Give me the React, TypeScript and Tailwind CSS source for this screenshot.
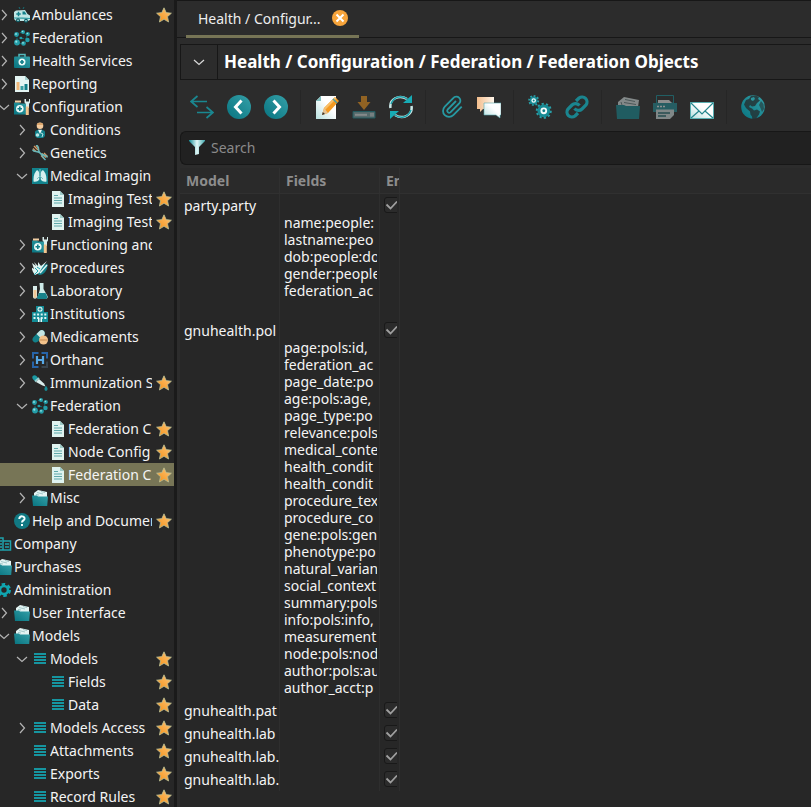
import type { ReactNode } from 'react';

const teal = '#12808a';
const aqua = '#1fa3ad';

function Glyph({ children, big = false, dim = false }: { children: ReactNode; big?: boolean; dim?: boolean }) {
  return (
    <svg
      viewBox={big ? '0 0 24 24' : '0 0 16 16'}
      className={`${big ? 'size-6' : 'size-4'} shrink-0 ${dim ? 'opacity-50' : ''}`}
      fill="none"
      aria-hidden="true"
    >
      {children}
    </svg>
  );
}

const folder = (
  <>
    <path d="M2 7V3l4-3 9 2v5z" fill="#e4f4f3" />
    <path d="M5 2.500l6 1.500M9 1.500l4 1M4 4.500l3 .5" stroke="#93bfc0" strokeWidth=".8" />
    <path d="M0 5.500h5l1 1h10L15.200 16H1z" fill="url(#tealFade)" />
  </>
);

const toolFolder = (
  <>
    <path d="M0 3.500h5l1 1h6V15.500H0z" fill="url(#tealFade)" />
    <path d="M1 1.500h6v2H1z" fill="#f2cfa4" />
    <path d="M10.500 0v3.500L12 5v4h3V5l1-1.500V0h-1v2.500h-3V0z" fill="#dcefed" />
    <path d="M11.800 7.500h3V16h-3z" fill="#f3c48e" />
    <circle cx="5.800" cy="9.800" r="3.800" fill="#ecfaf8" />
    <path d="M5.800 7.500V12M3.500 9.800H8" stroke={teal} strokeWidth="1.600" />
  </>
);

const network = (
  <>
    <path d="M3 4l5-2 5 3-1 7-5 2-4-3zM5 8l7 1" stroke="#127078" strokeWidth="1" strokeDasharray="2 1" />
    <g fill="#249da8">
      <circle cx="2.500" cy="4.500" r="2.400" />
      <circle cx="9" cy="2" r="2" />
      <circle cx="13.800" cy="4" r="2.100" />
      <circle cx="3" cy="12.500" r="2.900" />
      <circle cx="9.500" cy="13.500" r="2.300" />
      <circle cx="13.500" cy="10" r="2.200" />
      <circle cx="7" cy="8" r="1.300" />
    </g>
    <g fill="#8fe0e2">
      <circle cx="2" cy="4" r=".9" />
      <circle cx="8.500" cy="1.500" r=".8" />
      <circle cx="13.400" cy="3.500" r=".8" />
      <circle cx="2.300" cy="11.700" r="1.100" />
      <circle cx="9" cy="12.800" r=".9" />
    </g>
  </>
);

const icons: Record<string, ReactNode> = {
  folder,
  toolFolder,
  network,
  ambulance: (
    <>
      <path d="M5 0l1 2M9 2l1-2" stroke="#176e75" />
      <path d="M0 5l2-1.500 9-.500 2.500 4 2.500 1.500V13l-2 1H2l-2-2z" fill="#bfe6e5" />
      <path d="M8.500 4.500h2.200L12.500 7.500H8.500z" fill={teal} />
      <path d="M0 10.500h9l7 .5v1l-16-.5z" fill="#2d9aa1" />
      <path d="M4.500 4.800v4.400M2.300 7h4.400" stroke={teal} strokeWidth="1.500" />
      <circle cx="4" cy="13.300" r="2" fill="#0d5f68" />
      <circle cx="12" cy="13.800" r="2" fill="#0d5f68" />
      <circle cx="4" cy="13.300" r=".8" fill="#d3efed" />
      <circle cx="12" cy="13.800" r=".8" fill="#d3efed" />
    </>
  ),
  kit: (
    <>
      <path d="M5 4V1.500h6V4" stroke="#56b9bc" strokeWidth="1.500" />
      <rect y="3.500" width="16" height="11.500" rx="1" fill="url(#tealFade)" />
      <circle cx="8" cy="9" r="3.500" fill="#eafaf8" />
      <path d="M8 7v4M6 9h4" stroke={teal} strokeWidth="1.700" />
    </>
  ),
  report: (
    <>
      <path d="M1 0h10l4 4v12H1z" fill="#e4f5f3" />
      <path d="M11 0v4h4z" fill="#a8d3d2" />
      <path d="M2.500 6h3v8h-3z" fill="#efb77a" />
      <path d="M6.500 10h3v4h-3z" fill="#3a9fa3" />
      <path d="M10.500 8h3v6h-3z" fill={teal} />
    </>
  ),
  person: (
    <>
      <circle cx="8" cy="3.800" r="3.300" fill="#f5cb9d" />
      <path d="M4.800 3C5 0 11 0 11.200 3z" fill="#dca56b" />
      <path d="M3 9.500c1-2.500 9-2.500 10 0V14l-2 2H5l-2-2z" fill={teal} />
      <path d="M6 7.800h4L8 12z" fill="#f2fbfa" />
      <circle cx="5.500" cy="13" r="1.800" fill="#b6e5e4" />
      <path d="M9 11l2 1-1 3" stroke="#b6e5e4" />
    </>
  ),
  dna: (
    <>
      <path d="M2 1l4 4M1 3.500l3 3M4 .5l3 3M10 8.500l4 4M9 10.500l3 3M12 8l3.500 3.500" stroke="#d99a63" strokeWidth="1.300" />
      <path d="M.5 4.500C2 8 5 5 8 8s3 5 5.500 7M4 0c4 1 1 5 4 8s6 1 7.500 4.500" stroke="#69b6b8" strokeWidth="1.500" />
    </>
  ),
  lungs: (
    <>
      <rect width="16" height="16" fill="#12838d" />
      <path d="M7.300 5.500C6.500 2 5 1.500 3.800 3.500 1.500 6.500 1.500 10 1.500 13.500c2 .5 4.500 0 5.800-2z" fill="#d6f0ef" />
      <path d="M8.700 5.500c.8-3.500 2.300-4 3.500-2 2.300 3 2.300 6.500 2.300 10-2 .5-4.500 0-5.800-2z" fill="#d6f0ef" />
      <path d="M8 1v7L5 11M8 8l3 3" stroke="#7cc3c6" />
    </>
  ),
  page: (
    <>
      <path d="M2 0h8l4 4v12H2z" fill="#dff3f0" />
      <path d="M10 0v4h4z" fill="#9ccac7" />
      <path d="M4 4.500h4M4 7h8M4 9.500h8M4 12h8" stroke="#5fa8aa" />
    </>
  ),
  procedures: (
    <>
      <path d="M4 12c0-5 5-6 11.500-8.500C16 9 13 15 7 15z" fill={teal} />
      <path d="M0 3l4 3-2-4 4 4V2l3 4 6-5-5 7-3 5-4 2-2-3-2-5 3 2z" fill="#dff3f1" />
      <path d="M8 13l7-8" stroke="#dff3f1" strokeWidth="1.500" />
      <path d="M3 8l3 3M5 7l3 2M2 15l4-4" stroke={aqua} />
    </>
  ),
  lab: (
    <>
      <path d="M1 3h4v10.500c0 3-4 3-4 0z" fill="#d9ecea" />
      <path d="M1.500 7h3v6.500c0 2-3 2-3 0z" fill="#f0c595" />
      <path d="M7.500 0h4v6l4 7c1 2-1 3-2 3H7c-2 0-2-2-1-3l2-7z" fill="#cdebe8" />
      <path d="M7 10h6.500l2 4-1 2H6l-1-1.500z" fill="#17828a" />
    </>
  ),
  hospital: (
    <>
      <path d="M4 0h8v6h4v10H0V6h4z" fill="#138c96" />
      <circle cx="8" cy="3.200" r="2.500" fill="#e7f8f7" />
      <path d="M8 1.700v3M6.500 3.200h3" stroke={teal} />
      <path d="M1.500 8.500h13M1.500 12h13" stroke="#dff4f3" strokeWidth="1.800" strokeDasharray="2 1.600" />
      <path d="M6 12h4v4H6z" fill="#e9f7f6" />
      <path d="M8 12v4" stroke={teal} />
    </>
  ),
  pills: (
    <>
      <path d="M1.500 8l6-6c3-3 7 1 4.500 4.500l-6 6c-3.500 3-7.500-1-4.500-4.500z" fill="#138089" />
      <path d="M4.500 5l3-3c3-3 7 1 4.500 4.500L9 9.500z" fill="#c5e5e2" />
      <circle cx="11.500" cy="11" r="4.500" fill="#f2c28a" />
      <path d="M7.500 11h8" stroke="#c58b50" />
    </>
  ),
  orthanc: (
    <>
      <path d="M1 6.500V1h5.500M9.500 1H15v5.500" stroke="#2764a8" strokeWidth="2" />
      <path d="M1 9.500V15h5.500" stroke="#2764a8" strokeWidth="2" />
      <path d="M9.500 15H15V9.500" stroke="#39444d" strokeWidth="2" />
      <path d="M5 4v8M11 4v8M5 8h6" stroke="#57a8e5" strokeWidth="2.200" />
    </>
  ),
  dropper: (
    <>
      <path d="M1 .8C3-.8 5.500 1.500 6 3.500L3.500 6C1 5-.8 2.500 1 .8z" fill="#1b9aa4" />
      <path d="M3 6.500L7 3" stroke="#91cecf" strokeWidth="2" />
      <path d="M4 7l3-3 5 4.500 1.500 3-3-1z" fill="#dceeed" />
      <path d="M14 11c3 3 1 5 0 5s-3-2 0-5z" fill="#168b95" />
    </>
  ),
  help: (
    <>
      <circle cx="8" cy="8" r="8" fill="#117983" />
      <path d="M5.300 6c0-4 6-3 5.200 0C10 7.500 8 7.500 8 9.500M8 11v2" stroke="#f2ffff" strokeWidth="2" />
    </>
  ),
  company: (
    <>
      <path d="M1 2h6v12H1zM7 5h7.500v9H7z" stroke={aqua} strokeWidth="1.500" />
      <path d="M2 5h4M2 8h4M2 11h4M9 8h4M9 11h4" stroke={aqua} strokeWidth="1.500" />
    </>
  ),
  gear: (
    <>
      <circle cx="8" cy="8" r="5.800" stroke="#10a5b0" strokeWidth="2.400" strokeDasharray="3.500 2.570" />
      <circle cx="8" cy="8" r="4" stroke="#10a5b0" strokeWidth="2.600" />
    </>
  ),
  list: <path d="M2 3h12M2 6h12M2 9h12M2 12h12" stroke="#1695a0" strokeWidth="2" />,
};

type Node = { level: number; icon: string; label: string; open?: boolean; star?: boolean; current?: boolean };

const tree: Node[] = [
  { level: 1, icon: 'ambulance', label: 'Ambulances', open: false, star: true },
  { level: 1, icon: 'network', label: 'Federation', open: false },
  { level: 1, icon: 'kit', label: 'Health Services', open: false },
  { level: 1, icon: 'report', label: 'Reporting', open: false },
  { level: 1, icon: 'toolFolder', label: 'Configuration', open: true },
  { level: 2, icon: 'person', label: 'Conditions', open: false },
  { level: 2, icon: 'dna', label: 'Genetics', open: false },
  { level: 2, icon: 'lungs', label: 'Medical Imagin', open: true },
  { level: 3, icon: 'page', label: 'Imaging Test', star: true },
  { level: 3, icon: 'page', label: 'Imaging Test', star: true },
  { level: 2, icon: 'toolFolder', label: 'Functioning and', open: false },
  { level: 2, icon: 'procedures', label: 'Procedures', open: false },
  { level: 2, icon: 'lab', label: 'Laboratory', open: false },
  { level: 2, icon: 'hospital', label: 'Institutions', open: false },
  { level: 2, icon: 'pills', label: 'Medicaments', open: false },
  { level: 2, icon: 'orthanc', label: 'Orthanc', open: false },
  { level: 2, icon: 'dropper', label: 'Immunization S', open: false, star: true },
  { level: 2, icon: 'network', label: 'Federation', open: true },
  { level: 3, icon: 'page', label: 'Federation C', star: true },
  { level: 3, icon: 'page', label: 'Node Config', star: true },
  { level: 3, icon: 'page', label: 'Federation C', star: true, current: true },
  { level: 2, icon: 'folder', label: 'Misc', open: false },
  { level: 1, icon: 'help', label: 'Help and Documen', star: true },
  { level: 0, icon: 'company', label: 'Company' },
  { level: 0, icon: 'folder', label: 'Purchases' },
  { level: 0, icon: 'gear', label: 'Administration' },
  { level: 1, icon: 'folder', label: 'User Interface', open: false },
  { level: 1, icon: 'folder', label: 'Models', open: true },
  { level: 2, icon: 'list', label: 'Models', open: true, star: true },
  { level: 3, icon: 'list', label: 'Fields', star: true },
  { level: 3, icon: 'list', label: 'Data', star: true },
  { level: 2, icon: 'list', label: 'Models Access', open: false, star: true },
  { level: 2, icon: 'list', label: 'Attachments', star: true },
  { level: 2, icon: 'list', label: 'Exports', star: true },
  { level: 2, icon: 'list', label: 'Record Rules', star: true },
];

const indents = ['pl-0', 'pl-[18px]', 'pl-[36px]', 'pl-[54px]'];

function TreeRow({ node }: { node: Node }) {
  return (
    <li className={`flex h-[23px] items-center pr-0.5 ${indents[node.level]} ${node.current ? 'bg-[#777556]' : ''}`}>
      {node.open === undefined ? (
        <span className="w-4 shrink-0" />
      ) : (
        <button className="size-4 shrink-0" aria-label={node.open ? 'Collapse' : 'Expand'}>
          <Glyph>
            <path d={node.open ? 'M3 6l5 4.500L13 6' : 'M6 3l4.500 5L6 13'} stroke="#b4b4b4" strokeWidth="1.200" />
          </Glyph>
        </button>
      )}
      <a href="#" className="ml-0.5 flex min-w-0 flex-1 items-center gap-0.5" aria-current={node.current ? 'page' : undefined}>
        <Glyph>{icons[node.icon]}</Glyph>
        <span className="min-w-0 flex-1 overflow-x-clip whitespace-nowrap">{node.label}</span>
      </a>
      <span className="ml-1 size-4 shrink-0">
        {node.star && (
          <button className="block" aria-label="Favorite">
            <Glyph>
              <path
                d="M8 .8l2.200 4.800 5.200.6-3.900 3.500 1.100 5.300L8 12.300 3.400 15l1.100-5.300L.6 6.200l5.200-.6z"
                fill="url(#gold)"
                stroke="#b9bf95"
                strokeWidth=".8"
                strokeLinejoin="round"
              />
            </Glyph>
          </button>
        )}
      </span>
    </li>
  );
}

type Tool = { label: string; dim?: boolean; art: ReactNode };

const cog = (cx: number, cy: number, r: number, teeth: number) => (
  <>
    <circle cx={cx} cy={cy} r={r - 1} stroke="#2aa0a9" strokeWidth="2" pathLength={teeth * 2} strokeDasharray="1 1" />
    <circle cx={cx} cy={cy} r={r - 1.6} fill="#178b95" />
    <circle cx={cx} cy={cy} r={r * 0.42} fill="#f4fcfc" />
    <circle cx={cx} cy={cy} r={r * 0.18} fill={teal} />
  </>
);

const toolGroups: Tool[][] = [
  [
    {
      label: 'Switch view',
      art: <path d="M7.500 1L1 6.500 7.500 12M1 6.500h16M16.500 12l6.500 5.500-6.500 5.500M23 17.500H7" stroke="#1a8790" strokeWidth="1.700" />,
    },
    {
      label: 'Previous',
      art: (
        <>
          <circle cx="12" cy="12" r="12" fill="url(#tealFade)" />
          <path d="M14.500 5.500L8.500 12l6 6.500" stroke="#fff" strokeWidth="3" />
        </>
      ),
    },
    {
      label: 'Next',
      art: (
        <>
          <circle cx="12" cy="12" r="12" fill="url(#tealFade)" />
          <path d="M9.500 5.500l6 6.500-6 6.500" stroke="#fff" strokeWidth="3" />
        </>
      ),
    },
  ],
  [
    {
      label: 'New',
      art: (
        <>
          <path d="M6 1h15v23H1V6z" fill="url(#paper)" />
          <path d="M1 6h5V1z" fill="#7fbdbd" />
          <path d="M7 20l2-7L20 2l4 4-11 12z" fill="#f59a21" />
          <path d="M9 13L20 2l1.500 1.500L10 15z" fill="#f8c06a" />
          <path d="M7 20l2-7 4 5z" fill="#e5c394" />
          <path d="M7 20l.8-3L10 19z" fill="#333" />
          <path d="M18 4l4 4" stroke="#4f9da0" strokeWidth="1.500" />
        </>
      ),
    },
    {
      label: 'Save',
      dim: true,
      art: (
        <>
          <path d="M9 1h6v6h3.500L12 15 5.500 7H9z" fill="#f69a1c" />
          <path d="M1 16.500h22v6.500H1z" fill="#7fa9ab" stroke="#1b8992" />
          <path d="M3 19.800h12" stroke="#dce7e8" strokeWidth="2" />
          <path d="M19 18v3.500M21 18v3.500" stroke="#fff" />
        </>
      ),
    },
    {
      label: 'Reload',
      art: (
        <>
          <path d="M1.500 13C0 4 10-1 18 4" stroke="#cbe9e9" strokeWidth="2.500" />
          <path d="M22.500 11C24 20 14 25 6 20" stroke="#cbe9e9" strokeWidth="2.500" />
          <path d="M2 9C5 1 13 0 18 4M22 15c-3 8-11 9-16 5" stroke="#1ba0aa" strokeWidth="1.500" />
          <path d="M14 8h9V0zM10 16H1v8z" fill="#17acb6" />
        </>
      ),
    },
  ],
  [
    {
      label: 'Attachments',
      art: (
        <path
          d="M16 6l-8.400 8.600a2 2 0 0 0 2.800 2.800l8.400-8.600a4 4 0 1 0-5.600-5.600L4.800 11.700a6 6 0 1 0 8.500 8.500l8.400-8.500"
          stroke="#2799a2"
          strokeWidth="1.800"
        />
      ),
    },
    {
      label: 'Notes',
      art: (
        <>
          <path d="M0 2h17v12H6l-3 3v-3H0z" fill="url(#peach)" />
          <path d="M7 8h17v12h-1v3l-4-3H7z" fill="url(#paper)" stroke="#59aab0" strokeWidth=".6" />
        </>
      ),
    },
  ],
  [
    { label: 'Launch action', art: <>{cog(5.700, 5.500, 5.500, 8)}{cog(15.800, 15.800, 8, 10)}</> },
    {
      label: 'Relate',
      art: (
        <g stroke="#1a858f" strokeWidth="3.200">
          <path d="M9.500 13.500a5 5 0 0 0 7.500.5l4-4a5 5 0 0 0-7-7l-3 3" />
          <path d="M14.500 10.500a5 5 0 0 0-7.500-.5l-4 4a5 5 0 0 0 7 7l3-3" />
        </g>
      ),
    },
  ],
  [
    {
      label: 'Open report',
      dim: true,
      art: (
        <>
          <path d="M2 12V7l6-5 15 3-1 7z" fill="#dae5e5" />
          <path d="M9 4.500l10 2M8 7.500l12 2M5 7l1 3" stroke="#6b8385" />
          <path d="M0 10h8l2 1h14l-1 13H1z" fill="#168d96" />
        </>
      ),
    },
    {
      label: 'Print',
      dim: true,
      art: (
        <>
          <path d="M3.500.5h17V8h-17z" stroke="#18929c" />
          <path d="M5 5h11l3 3H5z" fill="#e9eeee" />
          <path d="M0 8h24v9H0z" fill="#218f98" />
          <path d="M4 11.500h9" stroke="#f0f5f5" strokeDasharray="2 1" strokeWidth="1.500" />
          <path d="M3 14.500h18V20l-4 4H3z" fill="#d4e4e4" />
          <path d="M5 18h12M5 21h8" stroke="#206c72" strokeWidth="1.500" />
        </>
      ),
    },
    {
      label: 'E-mail',
      art: (
        <>
          <path d="M.5 7.500h23v16H.5z" fill="url(#paper)" stroke="#5aafb2" />
          <path d="M1 8l11 11L23 8M1 23l8-7M23 23l-8-7" stroke="#26868d" strokeWidth="1.200" />
        </>
      ),
    },
  ],
  [
    {
      label: 'Web links',
      art: (
        <>
          <circle cx="12" cy="12" r="11.800" fill="url(#tealFade)" />
          <path d="M10 1l5-.5 3 1.500-1 2 2 1.500-3 2.500-2 3-3 .5-2-1.500-1 2 3 1.500 2 2 3-1 3 2-1 3-2.500 3.500-2 2.500h-2l-.5-4-1.500-2-.5-3L5 13l-2-3.500L5 5l3-1z" fill="#242e30" opacity=".8" />
          <path d="M10 3l3-1 1 2-2 2-2-1z" fill="#2b949c" />
          <path d="M20 6l2.500 3 .5 5-2 3-1.500-4-1.500-3z" fill="#242e30" opacity=".6" />
        </>
      ),
    },
  ],
];

type ModelRecord = { model: string; fields?: string[] };

const records: ModelRecord[] = [
  {
    model: 'party.party',
    fields: ['', 'name:people:', 'lastname:peo', 'dob:people:do', 'gender:people', 'federation_ac', ' '],
  },
  {
    model: 'gnuhealth.pol',
    fields: [
      '', 'page:pols:id,', 'federation_ac', 'page_date:po', 'age:pols:age,', 'page_type:po', 'relevance:pols',
      'medical_conte', 'health_condit', 'health_condit', 'procedure_tex', 'procedure_co', 'gene:pols:gen',
      'phenotype:po', 'natural_varian', 'social_context', 'summary:pols', 'info:pols:info,', 'measurement',
      'node:pols:nod', 'author:pols:au', 'author_acct:p',
    ],
  },
  { model: 'gnuhealth.pat' },
  { model: 'gnuhealth.lab' },
  { model: 'gnuhealth.lab.' },
  { model: 'gnuhealth.lab.' },
];

export default function App() {
  return (
    <div className="flex h-screen overflow-hidden bg-[#2c2c2c] font-['Noto_Sans',sans-serif] text-sm leading-[17px] text-[#f4f4f4]">
      <svg className="absolute size-0" aria-hidden="true">
        <defs>
          <linearGradient id="tealFade" x1="0" y1="1" x2="1" y2="0">
            <stop stopColor="#087480" />
            <stop offset="1" stopColor="#35a0a8" />
          </linearGradient>
          <linearGradient id="paper" x1="0" y1="1" x2="1" y2="0">
            <stop stopColor="#b8e0df" />
            <stop offset=".6" stopColor="#fff" />
          </linearGradient>
          <linearGradient id="peach">
            <stop stopColor="#f3bd8c" />
            <stop offset="1" stopColor="#fff6eb" />
          </linearGradient>
          <linearGradient id="funnel">
            <stop stopColor="#138b95" />
            <stop offset=".5" stopColor="#e2f7f6" />
            <stop offset="1" stopColor="#3ea6ac" />
          </linearGradient>
          <linearGradient id="gold" x1="0" y1="1" x2="1" y2="0">
            <stop stopColor="#f48f14" />
            <stop offset="1" stopColor="#ffc87c" />
          </linearGradient>
        </defs>
      </svg>

      <nav aria-label="Menu" className="w-[177px] shrink-0 overflow-hidden border-r-3 border-[#1a1a1a] bg-[#272727] pt-[3px]">
        <ul className="-ml-[22px]">
          {tree.map((node, i) => (
            <TreeRow key={i} node={node} />
          ))}
        </ul>
      </nav>

      <main className="flex min-w-0 flex-1 flex-col border-t border-[#171717]">
        <div className="flex h-[37px] shrink-0 border-b border-[#171717] pl-[9px]">
          <div className="flex h-[37px] w-[173px] items-center justify-between border-b-3 border-[#777556] pr-[11px] pl-3">
            <button className="text-[#eeeeee]">Health / Configur...</button>
            <button aria-label="Close tab">
              <Glyph>
                <circle cx="8" cy="8" r="8" fill="#f7a43b" />
                <path d="M4.500 4.500l7 7M11.500 4.500l-7 7" stroke="#fff" strokeWidth="2" />
              </Glyph>
            </button>
          </div>
        </div>

        <div className="mt-1.5 ml-[3px] flex h-9 shrink-0 border-y border-l border-[#171717]">
          <button aria-label="Menu" className="grid w-[37px] place-items-center border-r border-[#171717]">
            <Glyph>
              <path d="M3 6l5 4.500L13 6" stroke="#d8d8d8" strokeWidth="1.300" />
            </Glyph>
          </button>
          <h1 className="flex items-center pb-0.5 pl-1.5 text-[17px] font-bold whitespace-nowrap text-white">
            Health / Configuration / Federation / Federation Objects
          </h1>
        </div>

        <div role="toolbar" aria-label="Actions" className="flex h-[51px] shrink-0 items-center pt-0.5 pl-[6px]">
          {toolGroups.map((group, i) => (
            <div key={i} className={`flex ${i > 0 ? 'ml-[6px] border-l border-[#262626] pl-[7px]' : ''}`}>
              {group.map((tool) => (
                <button key={tool.label} aria-label={tool.label} disabled={tool.dim} className="grid h-[34px] w-[37px] place-items-center">
                  <Glyph big dim={tool.dim}>{tool.art}</Glyph>
                </button>
              ))}
            </div>
          ))}
        </div>

        <label className="ml-[3px] flex h-[34px] shrink-0 items-center gap-[6px] rounded-l-md border-y border-l border-[#171717] bg-[#212121] pb-0.5 pl-2">
          <Glyph>
            <path d="M0 1h16v1l-6 6v7l-4 1V8L0 2z" fill="url(#funnel)" />
          </Glyph>
          <input
            aria-label="Search"
            placeholder="Search"
            className="min-w-0 flex-1 bg-transparent outline-none placeholder:text-[#8a8a8a]"
          />
        </label>

        <div className="mt-[3px] ml-[3px] min-h-0 flex-1 overflow-hidden bg-[#272727]">
          <table className="w-full table-fixed border-separate border-spacing-0 text-left">
            <thead className="bg-[#2a2a2a] text-[#8d8d8d]">
              <tr className="h-[26px]">
                <th className="w-[100px] border-r border-b border-[#303030] p-0 pl-1.5 font-bold">Model</th>
                <th className="w-[100px] border-r border-b border-[#303030] p-0 pl-1.5 font-bold">Fields</th>
                <th className="w-[20px] border-r border-b border-[#303030] p-0 pl-1.5 font-bold">
                  <div className="overflow-x-clip">En</div>
                </th>
                <th className="border-b border-[#303030] p-0" aria-label="Spare" />
              </tr>
            </thead>
            <tbody>
              {records.map((record, i) => (
                <tr key={i} className="align-top">
                  <td className="border-r border-[#2e2e2e] py-[3px] pl-1">
                    <div className="overflow-x-clip whitespace-nowrap">{record.model}</div>
                  </td>
                  <td className="border-r border-[#2e2e2e] py-[3px] pr-0.5 pl-1">
                    <div className="overflow-x-clip whitespace-pre">{record.fields?.join('\n')}</div>
                  </td>
                  <td className="border-r border-[#2e2e2e] py-[3px] pr-0.5 pl-1">
                    <label className="grid h-4 overflow-hidden">
                      <input
                        type="checkbox"
                        defaultChecked
                        aria-label="Enabled"
                        className="col-start-1 row-start-1 size-4 appearance-none rounded-[3px] border border-[#191919] bg-[#2b2b2b]"
                      />
                      <svg viewBox="0 0 16 16" className="pointer-events-none col-start-1 row-start-1 size-4" fill="none" aria-hidden="true">
                        <path d="M2.500 7.500l4 4 6.500-7" stroke="#a0a0a0" strokeWidth="1.800" />
                      </svg>
                    </label>
                  </td>
                  <td />
                </tr>
              ))}
            </tbody>
          </table>
        </div>
      </main>
    </div>
  );
}
